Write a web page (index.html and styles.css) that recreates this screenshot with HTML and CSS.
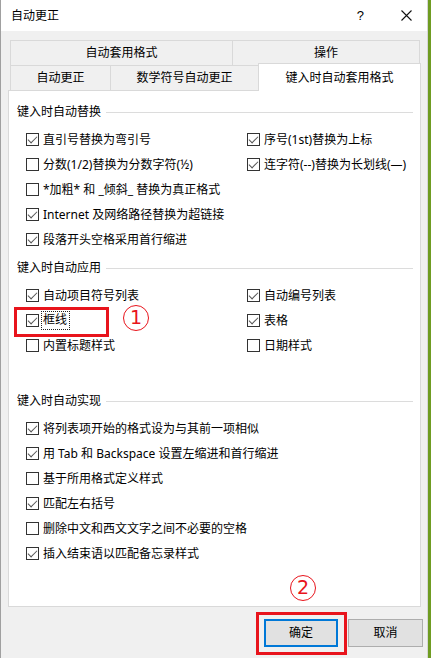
FILE: index.html
```html
<!DOCTYPE html>
<html lang="zh-CN">
<head>
<meta charset="utf-8">
<title>自动更正</title>
<link rel="stylesheet" href="styles.css">
</head>
<body>
<div class="screen">
  <div class="window">
    <div class="titlebar">
      <span class="title">自动更正</span>
      <span class="help">?</span>
      <svg class="close" width="11" height="11" viewBox="0 0 11 11"><path d="M0.5 0.5 L10.5 10.5 M10.5 0.5 L0.5 10.5" stroke="#111" stroke-width="1.1" fill="none"/></svg>
    </div>

    <div class="tabs">
      <div class="tabrow">
        <div class="tab tab-a">自动套用格式</div>
        <div class="tab tab-b">操作</div>
      </div>
      <div class="tabrow">
        <div class="tab tab-c">自动更正</div>
        <div class="tab tab-d">数学符号自动更正</div>
        <div class="tab active">键入时自动套用格式</div>
      </div>
    </div>

    <div class="panel">
      <section class="group g1">
        <div class="heading"><span>键入时自动替换</span><i class="rule"></i></div>
        <div class="grid">
          <div class="item"><span class="box on"></span><span class="lbl">直引号替换为弯引号</span></div>
          <div class="item"><span class="box on"></span><span class="lbl">序号(1st)替换为上标</span></div>
          <div class="item"><span class="box"></span><span class="lbl">分数(1/2)替换为分数字符(½)</span></div>
          <div class="item"><span class="box on"></span><span class="lbl">连字符(--)替换为长划线(—)</span></div>
          <div class="item full"><span class="box"></span><span class="lbl">*加粗* 和 _倾斜_ 替换为真正格式</span></div>
          <div class="item full"><span class="box on"></span><span class="lbl">Internet 及网络路径替换为超链接</span></div>
          <div class="item full"><span class="box on"></span><span class="lbl">段落开头空格采用首行缩进</span></div>
        </div>
      </section>

      <section class="group g2">
        <div class="heading"><span>键入时自动应用</span><i class="rule"></i></div>
        <div class="grid">
          <div class="item"><span class="box on"></span><span class="lbl">自动项目符号列表</span></div>
          <div class="item"><span class="box on"></span><span class="lbl">自动编号列表</span></div>
          <div class="item"><span class="box on"></span><span class="lbl focus">框线</span></div>
          <div class="item"><span class="box on"></span><span class="lbl">表格</span></div>
          <div class="item"><span class="box"></span><span class="lbl">内置标题样式</span></div>
          <div class="item"><span class="box"></span><span class="lbl">日期样式</span></div>
        </div>
      </section>

      <section class="group g3">
        <div class="heading"><span>键入时自动实现</span><i class="rule"></i></div>
        <div class="grid">
          <div class="item full"><span class="box on"></span><span class="lbl">将列表项开始的格式设为与其前一项相似</span></div>
          <div class="item full"><span class="box on"></span><span class="lbl">用 Tab 和 Backspace 设置左缩进和首行缩进</span></div>
          <div class="item full"><span class="box"></span><span class="lbl">基于所用格式定义样式</span></div>
          <div class="item full"><span class="box on"></span><span class="lbl">匹配左右括号</span></div>
          <div class="item full"><span class="box"></span><span class="lbl">删除中文和西文文字之间不必要的空格</span></div>
          <div class="item full"><span class="box on"></span><span class="lbl">插入结束语以匹配备忘录样式</span></div>
        </div>
      </section>
    </div>

    <div class="buttons">
      <div class="btn primary">确定</div>
      <div class="btn">取消</div>
    </div>
  </div>

  <div class="mark mark-1"></div>
  <div class="num num-1">1</div>
  <div class="num num-2">2</div>
  <div class="mark mark-2"></div>
</div>
</body>
</html>
```

FILE: styles.css
```css
* { box-sizing: border-box; }
html, body { margin: 0; padding: 0; }
body {
  width: 431px;
  height: 658px;
  overflow: hidden;
  font-family: "Noto Sans", "Noto Sans CJK SC", sans-serif;
  font-size: 12px;
  color: #000;
  background: #6f9c22;
}
.screen {
  position: relative;
  width: 431px;
  height: 658px;
}
.window {
  width: 428px;
  height: 658px;
  background: #f0f0f0;
  border-left: 1px solid #a0a0a0;
  border-right: 1px solid #d6d6d6;
  display: flex;
  flex-direction: column;
}

/* title bar */
.titlebar {
  height: 31px;
  background: #fff;
  display: flex;
  align-items: center;
  padding-left: 10px;
  padding-right: 15px;
  flex: none;
}
.title {
  flex: 1;
  font-size: 12px;
  line-height: 16px;
}
.help {
  font-family: "Liberation Sans", sans-serif;
  font-size: 13px;
  line-height: 16px;
}
.close {
  margin-left: 37px;
  display: block;
}

/* tabs */
.tabs {
  padding-left: 9px;
  margin-top: 9px;
  flex: none;
}
.tabrow {
  display: flex;
  align-items: flex-start;
  height: 25px;
}
.tab {
  height: 25px;
  border: 1px solid #d9d9d9;
  border-bottom: none;
  background: #f0f0f0;
  text-align: center;
  line-height: 24px;
  white-space: nowrap;
}
.tab + .tab { margin-left: -1px; }
.tab-a { width: 223px; }
.tab-b { width: 188px; }
.tab-c { width: 101px; }
.tab-d { width: 149px; }
.tab.active {
  width: 163px;
  height: 28px;
  margin-top: -2px;
  margin-bottom: -1px;
  background: #fff;
  line-height: 27px;
  position: relative;
  z-index: 2;
}

/* panel */
.panel {
  margin-left: 7px;
  width: 413px;
  height: 517px;
  flex: none;
  background: #fff;
  border: 1px solid #d9d9d9;
  padding: 13px 7px 0 8px;
}
.heading {
  display: flex;
  align-items: center;
  height: 16px;
  line-height: 16px;
  margin-bottom: 7px;
  white-space: nowrap;
}
.rule {
  flex: 1;
  height: 1px;
  background: #dcdcdc;
  margin-left: 5px;
}
.g2 { margin-top: 8px; }
.g3 { margin-top: 35px; }
.grid {
  display: grid;
  grid-template-columns: 221px 1fr;
  grid-auto-rows: 25px;
  padding-left: 9px;
}
.item {
  display: flex;
  align-items: center;
  white-space: nowrap;
}
.item.full { grid-column: 1 / -1; }
.box {
  width: 13px;
  height: 13px;
  border: 1px solid #333;
  background: #fff;
  margin-right: 3px;
  flex: none;
  position: relative;
}
.box.on::after {
  content: "";
  position: absolute;
  left: 3px;
  top: 0px;
  width: 4px;
  height: 8px;
  border-right: 1.3px solid #555;
  border-bottom: 1.3px solid #555;
  transform: rotate(45deg);
  transform-origin: 50% 50%;
}
.lbl {
  padding: 0 1px;
  line-height: 16px;
}
.lbl.focus {
  outline: 1px dotted #222;
  outline-offset: 0;
  padding: 0 2px 1px 1px;
}

/* buttons */
.buttons {
  display: flex;
  justify-content: flex-end;
  gap: 10px;
  margin-top: 12px;
  padding-right: 4px;
}
.btn {
  width: 75px;
  height: 28px;
  background: #e1e1e1;
  border: 1px solid #adadad;
  text-align: center;
  line-height: 26px;
}
.btn.primary {
  width: 74px;
  border: 2px solid #0078d7;
  line-height: 24px;
}

/* annotations */
.mark {
  position: absolute;
  border: 3px solid #e8141c;
}
.mark-1 { left: 14px; top: 307px; width: 95px; height: 30px; }
.mark-2 { left: 256px; top: 612px; width: 91px; height: 43px; }
.num {
  position: absolute;
  width: 26px;
  height: 26px;
  border: 1.6px solid #e8141c;
  border-radius: 50%;
  color: #e8141c;
  font-family: "DejaVu Sans", sans-serif;
  font-size: 19px;
  line-height: 23px;
  text-align: center;
}
.num-1 { left: 123px; top: 305px; }
.num-2 { left: 290px; top: 575px; }
```
